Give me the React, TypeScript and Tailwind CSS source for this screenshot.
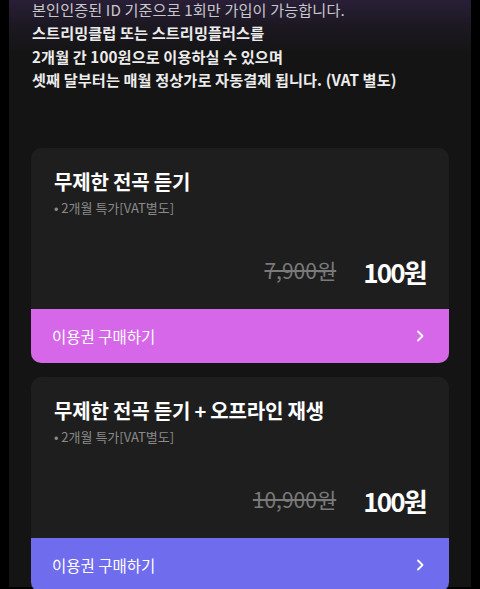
import React from "react";

function Chevron() {
  return (
    <svg width="10" height="14" viewBox="0 0 10 14" fill="none">
      <path d="M3 2.5 L7.5 7 L3 11.5" stroke="white" strokeWidth="1.8" strokeLinecap="round" strokeLinejoin="round" />
    </svg>
  );
}

function Card({ title, orig, btn }: { title: string; orig: string; btn: string }) {
  return (
    <div className="rounded-[10px] bg-[#1e1e1e] overflow-hidden">
      <div className="h-[161px] pl-[23px] pr-[22px] pt-[20px] flex flex-col">
        <div className="text-[20px] leading-[28px] font-bold text-white tracking-[-0.2px]">{title}</div>
        <div className="mt-[3px] text-[13px] leading-[18px] text-[#8a8a8a]">• 2개월 특가[VAT별도]</div>
        <div className="mt-[36px] flex items-center justify-end h-[36px]">
          <span className="text-[21px] text-[#7a7a7a] line-through">{orig}</span>
          <span className="ml-[27px] text-[26px] font-bold text-white tracking-[-1.8px] pr-[1px]">100원</span>
        </div>
      </div>
      <div className={`h-[54px] flex items-center justify-between pl-[21px] pr-[24px] ${btn}`}>
        <span className="text-[15.5px] text-white">이용권 구매하기</span>
        <Chevron />
      </div>
    </div>
  );
}

export default function App() {
  return (
    <div
      className="w-[480px] h-[589px] bg-black overflow-hidden"
      style={{ fontFamily: '"Noto Sans CJK KR", "Noto Sans", sans-serif' }}
    >
      <div className="mx-[9px] h-full bg-[#141414] bg-[linear-gradient(to_bottom,#2a1f38_0px,#1c1822_28px,#141414_55px)]">
        <div className="pl-[23px] pt-0 -mt-[2px] text-[15.2px] leading-[23.3px] tracking-[0.1px]">
          <div className="text-[#c9c6cc]">본인인증된 ID 기준으로 1회만 가입이 가능합니다.</div>
          <div className="font-bold text-[#ececec]">스트리밍클럽 또는 스트리밍플러스를</div>
          <div className="font-bold text-[#ececec]">2개월 간 100원으로 이용하실 수 있으며</div>
          <div className="font-bold text-[#ececec]">셋째 달부터는 매월 정상가로 자동결제 됩니다. (VAT 별도)</div>
        </div>
        <div className="mx-[22px] mt-[57px] flex flex-col gap-[14px]">
          <Card title="무제한 전곡 듣기" orig="7,900원" btn="bg-[#d667e9]" />
          <Card title="무제한 전곡 듣기 + 오프라인 재생" orig="10,900원" btn="bg-[#6f6ced]" />
        </div>
      </div>
    </div>
  );
}
